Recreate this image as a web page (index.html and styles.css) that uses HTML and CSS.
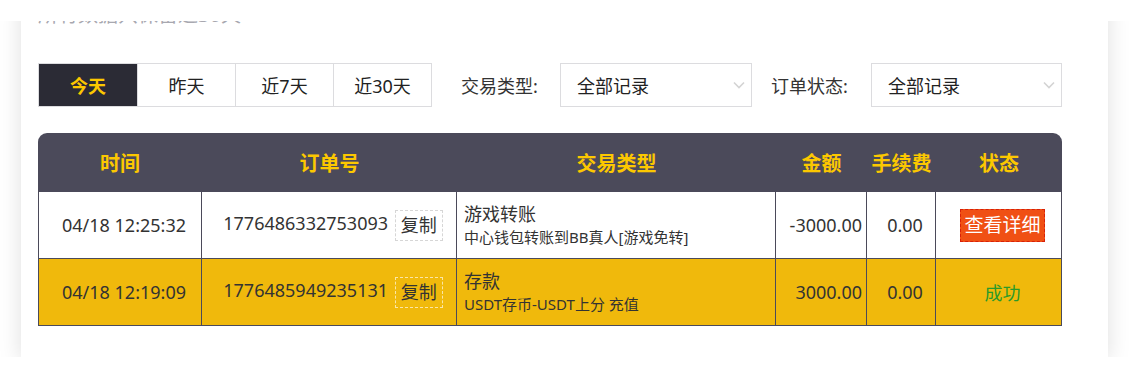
FILE: index.html
```html
<!DOCTYPE html>
<html lang="zh-CN">
<head>
    <meta charset="UTF-8">
    <title>交易记录</title>
    <link rel="stylesheet" href="styles.css">
</head>
<body>
    <div class="topbar"></div>
    <div class="card">
        <p class="note">所有数据只保留近30天</p>

        <div class="filters">
            <div class="tabs">
                <span class="tab active">今天</span>
                <span class="tab">昨天</span>
                <span class="tab">近7天</span>
                <span class="tab">近30天</span>
            </div>
            <label class="flabel first">交易类型:</label>
            <div class="select">
                <span>全部记录</span>
                <svg width="12" height="8" viewBox="0 0 12 8"><path d="M1 1.5 L6 6.5 L11 1.5" fill="none" stroke="#d4d4d4" stroke-width="1.6"/></svg>
            </div>
            <label class="flabel second">订单状态:</label>
            <div class="select">
                <span>全部记录</span>
                <svg width="12" height="8" viewBox="0 0 12 8"><path d="M1 1.5 L6 6.5 L11 1.5" fill="none" stroke="#d4d4d4" stroke-width="1.6"/></svg>
            </div>
        </div>

        <table class="records">
            <colgroup>
                <col style="width:164px">
                <col style="width:255px">
                <col style="width:319px">
                <col style="width:91px">
                <col style="width:69px">
                <col style="width:126px">
            </colgroup>
            <thead>
                <tr>
                    <th>时间</th>
                    <th>订单号</th>
                    <th>交易类型</th>
                    <th>金额</th>
                    <th>手续费</th>
                    <th>状态</th>
                </tr>
            </thead>
            <tbody>
                <tr>
                    <td>04/18 12:25:32</td>
                    <td class="order">1776486332753093 <span class="copy">复制</span></td>
                    <td class="type">
                        <div class="type-title">游戏转账</div>
                        <div class="type-desc">中心钱包转账到BB真人[游戏免转]</div>
                    </td>
                    <td class="amount">-3000.00</td>
                    <td>0.00</td>
                    <td><span class="detail">查看详细</span></td>
                </tr>
                <tr class="hl">
                    <td>04/18 12:19:09</td>
                    <td class="order">1776485949235131 <span class="copy">复制</span></td>
                    <td class="type">
                        <div class="type-title">存款</div>
                        <div class="type-desc">USDT存币-USDT上分 充值</div>
                    </td>
                    <td class="amount">3000.00</td>
                    <td>0.00</td>
                    <td><span class="ok">成功</span></td>
                </tr>
            </tbody>
        </table>
    </div>
</body>
</html>
```

FILE: styles.css
```css
body {
    margin: 0;
    background: #ffffff;
    font-family: 'Noto Sans', 'Noto Sans CJK SC', sans-serif;
    color: #333;
}

/* white strip over the scrolled top edge */
.topbar {
    position: fixed;
    top: 0;
    left: 0;
    width: 100%;
    height: 21px;
    background: #ffffff;
    z-index: 10;
}

.card {
    margin-left: 21px;
    width: 1087px;
    box-sizing: border-box;
    padding: 1px 46px 31px 17px;
    background: #ffffff;
    box-shadow: 0 4px 22px rgba(0, 0, 0, 0.13);
}

.note {
    margin: 0;
    font-size: 20px;
    line-height: 28px;
    color: #a8a8b0;
}

.filters {
    display: flex;
    align-items: center;
    margin-top: 34px;
    height: 44px;
}

.tabs {
    display: flex;
    border: 1px solid #dcdcdf;
    height: 42px;
}

.tab {
    width: 97px;
    display: flex;
    align-items: center;
    justify-content: center;
    font-size: 18px;
    color: #222;
    border-left: 1px solid #dcdcdf;
}

.tab:first-child {
    width: 98px;
    border-left: none;
}

.tab.active {
    background: #2b2b35;
    color: #fcc800;
    font-weight: bold;
}

.flabel {
    font-size: 18px;
    color: #333;
}

.flabel.first {
    width: 99px;
    margin-left: 29px;
}

.flabel.second {
    width: 100px;
    margin-left: 19px;
}

.select {
    width: 192px;
    height: 44px;
    box-sizing: border-box;
    border: 1px solid #dcdcdf;
    display: flex;
    align-items: center;
    justify-content: space-between;
    padding: 0 6px 0 16px;
    font-size: 18px;
    color: #222;
}

.select:last-child {
    width: 191px;
}

.records {
    margin-top: 26px;
    width: 1024px;
    table-layout: fixed;
    border-collapse: separate;
    border-spacing: 0;
}

.records th {
    height: 59px;
    padding: 0;
    background: #4b4a5a;
    color: #fcc800;
    font-size: 20px;
    font-weight: bold;
}

.records th:first-child {
    border-top-left-radius: 9px;
}

.records th:last-child {
    border-top-right-radius: 9px;
}

.records td {
    height: 66px;
    padding: 0 0 0 8px;
    text-align: center;
    font-size: 18px;
    color: #333;
    border-right: 1px solid #4b4a5a;
    border-bottom: 1px solid #4b4a5a;
}

.records td:first-child {
    border-left: 1px solid #4b4a5a;
}

.records tr.hl td {
    background: #f0b90c;
}

.copy {
    display: inline-block;
    margin-left: 2px;
    padding: 0 5px;
    height: 29px;
    line-height: 29px;
    border: 1px dashed #d6d6d6;
    vertical-align: middle;
}

.hl .copy {
    border-color: #fbe6a6;
}

.records td.type {
    text-align: left;
    padding-left: 7px;
}

.type-title {
    font-size: 18px;
    line-height: 24px;
}

.type-desc {
    font-size: 15px;
    line-height: 22px;
}

.records td.amount {
    text-align: right;
    padding-right: 4px;
}

.detail {
    display: inline-block;
    padding: 0 3px;
    height: 31px;
    line-height: 31px;
    background: #f05014;
    color: #ffffff;
    font-size: 19px;
    border: 1px dashed #d82008;
}

.ok {
    color: #2a9a2a;
}
```
